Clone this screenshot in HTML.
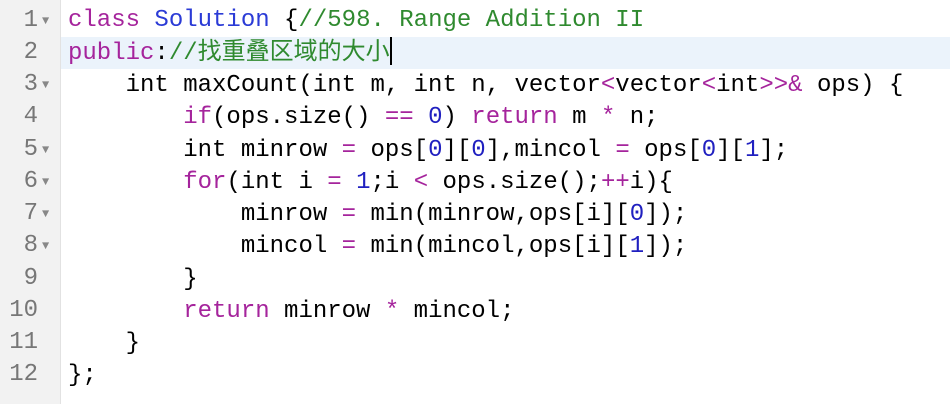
<!DOCTYPE html>
<html><head><meta charset="utf-8"><style>
body{margin:0;width:950px;height:404px;background:#fff;overflow:hidden;position:relative;font-family:"Liberation Mono","Noto Sans CJK SC",monospace;font-size:24px;}
.gut{position:absolute;left:0;top:0;width:60px;height:404px;background:#f2f2f2;border-right:1px solid #e2e2e2;}
.hl{position:absolute;left:61px;top:37px;width:889px;height:32px;background:#ebf3fb;}
.ln{position:absolute;left:0;width:38px;text-align:right;color:#777;line-height:32.27px;}
.ar{position:absolute;left:42px;color:#888;font-size:12px;line-height:32.27px;}
.code{position:absolute;left:68px;top:4.5px;line-height:32.27px;white-space:pre;color:#000;}
.k{color:#a5249c}.t{color:#2b3bd6}.c{color:#2f8a2f}.n{color:#2020c0}.o{color:#a5249c}
.cur{display:inline-block;width:2px;height:28px;background:#000;vertical-align:-6px;}
</style></head><body>
<div class="gut"></div>
<div class="hl"></div>
<div class="ln" style="top:4.5px">1<br>2<br>3<br>4<br>5<br>6<br>7<br>8<br>9<br>10<br>11<br>12</div>
<div class="ar" style="top:4.5px">▼</div>
<div class="ar" style="top:69px">▼</div>
<div class="ar" style="top:133.6px">▼</div>
<div class="ar" style="top:165.9px">▼</div>
<div class="ar" style="top:198.1px">▼</div>
<div class="ar" style="top:230.4px">▼</div>
<div class="code"><span class="k">class</span> <span class="t">Solution</span> {<span class="c">//598. Range Addition II</span>
<span class="k">public</span>:<span class="c">//找重叠区域的大小</span><span class="cur"></span>
    int maxCount(int m, int n, vector<span class="o">&lt;</span>vector<span class="o">&lt;</span>int<span class="o">&gt;&gt;&amp;</span> ops) {
        <span class="k">if</span>(ops.size() <span class="o">==</span> <span class="n">0</span>) <span class="k">return</span> m <span class="o">*</span> n;
        int minrow <span class="o">=</span> ops[<span class="n">0</span>][<span class="n">0</span>],mincol <span class="o">=</span> ops[<span class="n">0</span>][<span class="n">1</span>];
        <span class="k">for</span>(int i <span class="o">=</span> <span class="n">1</span>;i <span class="o">&lt;</span> ops.size();<span class="o">++</span>i){
            minrow <span class="o">=</span> min(minrow,ops[i][<span class="n">0</span>]);
            mincol <span class="o">=</span> min(mincol,ops[i][<span class="n">1</span>]);
        }
        <span class="k">return</span> minrow <span class="o">*</span> mincol;
    }
};</div>
</body></html>
